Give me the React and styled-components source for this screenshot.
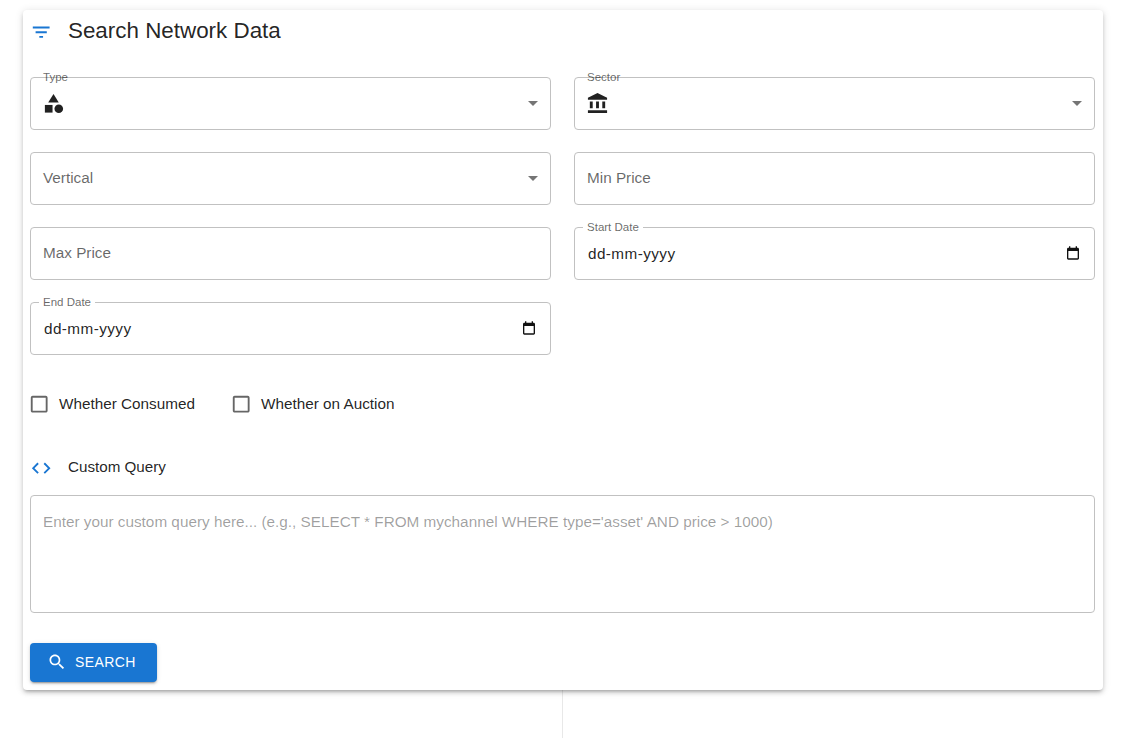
import React from 'react';
import styled, { createGlobalStyle } from 'styled-components';

const Global = createGlobalStyle`
  html, body { margin: 0; padding: 0; background: #fff; }
  body { font-family: "Liberation Sans", Arial, sans-serif; color: rgba(0,0,0,.87); }
  #root { height: 738px; overflow: hidden; }
`;

const Page = styled.div`
  height: 738px;
  display: flex;
  flex-direction: column;
  padding-top: 10px;
  box-sizing: border-box;
`;

const Card = styled.section`
  width: 1080px;
  height: 680px;
  margin-left: 23px;
  box-sizing: border-box;
  padding: 0 8px 0 7px;
  background: #fff;
  border-radius: 4px;
  box-shadow: 0 3px 3px -2px rgba(0,0,0,.2), 0 3px 4px 0 rgba(0,0,0,.14), 0 1px 8px 0 rgba(0,0,0,.12);
  position: relative;
  z-index: 1;
`;

const Divider = styled.div`
  flex: 1;
  width: 1px;
  margin-left: 562px;
  background: #e8e8e8;
`;

const Header = styled.header`
  display: flex;
  align-items: center;
  height: 42px;
  margin-bottom: 25px;
`;

const Title = styled.h2`
  margin: 0;
  font-size: 22.4px;
  font-weight: 400;
  line-height: 42px;
  color: rgba(0,0,0,.87);
`;

const LeadIcon = styled.svg`
  width: 22.4px;
  height: 22.4px;
  flex: none;
  margin: 2px 15.6px 0 0;
  fill: #1976d2;
`;

const Grid = styled.div`
  display: grid;
  grid-template-columns: 521px 521px;
  column-gap: 23px;
  grid-auto-rows: 53px;
  row-gap: 22px;
`;

const Field = styled.div`
  position: relative;
  box-sizing: border-box;
  height: 53px;
  border: 1px solid #c1c1c1;
  border-radius: 4px;
  display: flex;
  align-items: center;
  padding: 0 12px;
`;

const FloatLabel = styled.label`
  position: absolute;
  top: -7px;
  left: ${p => (p.$notch ? '8px' : '12px')};
  padding: ${p => (p.$notch ? '0 4px' : '0')};
  background: ${p => (p.$notch ? '#fff' : 'transparent')};
  font-size: 11.52px;
  line-height: 12px;
  color: rgba(0,0,0,.6);
`;

const Placeholder = styled.span`
  font-size: 15.3px;
  color: rgba(0,0,0,.6);
  margin-bottom: 2px;
`;

const DateText = styled.span`
  flex: 1;
  margin-left: 1px;
  font-size: 15.3px;
  letter-spacing: .42px;
  color: rgba(0,0,0,.87);
`;

const ValueIcon = styled.svg`
  width: 23px;
  height: 23px;
  margin: 0 0 1px -.6px;
  fill: rgba(0,0,0,.87);
`;

const Arrow = styled.svg`
  position: absolute;
  right: 5px;
  top: 13px;
  width: 24px;
  height: 24px;
  fill: rgba(0,0,0,.54);
`;

const CalendarIcon = styled.svg`
  width: 16px;
  height: 16px;
  margin: 0 1.5px 2px 0;
  fill: #111;
`;

const CheckRow = styled.div`
  display: flex;
  align-items: center;
  gap: 37px;
  margin-top: 37px;
  height: 24px;
`;

const CheckLabel = styled.label`
  display: flex;
  align-items: center;
  font-size: 15.3px;
  color: rgba(0,0,0,.87);
`;

const CheckIcon = styled.svg`
  width: 22.4px;
  height: 22.4px;
  margin: 0 8.4px 0 -1.8px;
  fill: rgba(0,0,0,.6);
`;

const QueryHeader = styled.div`
  display: flex;
  align-items: center;
  height: 24px;
  margin-top: 39px;
`;

const QueryTitle = styled.span`
  font-size: 15.2px;
  margin-bottom: 2px;
  color: rgba(0,0,0,.87);
`;

const QueryBox = styled.div`
  box-sizing: border-box;
  margin-top: 16px;
  height: 118px;
  border: 1px solid #c1c1c1;
  border-radius: 4px;
  padding: 17px 12px;
  font-size: 15.3px;
  line-height: 18px;
  color: rgba(0,0,0,.38);
`;

const SearchButton = styled.button`
  display: flex;
  align-items: center;
  margin-top: 30px;
  width: 127px;
  height: 39px;
  padding: 0 0 1px 17px;
  border: 0;
  border-radius: 4px;
  background: #1976d2;
  color: #fff;
  font-family: inherit;
  font-size: 14px;
  font-weight: 400;
  letter-spacing: .4px;
  box-shadow: 0 3px 1px -2px rgba(0,0,0,.2), 0 2px 2px 0 rgba(0,0,0,.14), 0 1px 5px 0 rgba(0,0,0,.12);
`;

const SearchIcon = styled.svg`
  width: 20px;
  height: 20px;
  margin-right: 8px;
  fill: #fff;
`;

const Icon = ({ as: C, d, children }) => (
  <C viewBox="0 0 24 24">{d ? <path d={d} /> : children}</C>
);

const CAL = 'M19 4h-1V2h-2v2H8V2H6v2H5c-1.1 0-2 .9-2 2v14c0 1.1.9 2 2 2h14c1.1 0 2-.9 2-2V6c0-1.1-.9-2-2-2zm0 16H5V9h14v11z';
const DROP = 'M7 10l5 5 5-5z';
const CHECK = 'M19 5v14H5V5h14m0-2H5c-1.1 0-2 .9-2 2v14c0 1.1.9 2 2 2h14c1.1 0 2-.9 2-2V5c0-1.1-.9-2-2-2z';

const SelectField = ({ label, children, placeholder }) => (
  <Field>
    {label && <FloatLabel>{label}</FloatLabel>}
    {children}
    {placeholder && <Placeholder>{placeholder}</Placeholder>}
    <Icon as={Arrow} d={DROP} />
  </Field>
);

const DateField = ({ label }) => (
  <Field>
    <FloatLabel $notch>{label}</FloatLabel>
    <DateText>dd-mm-yyyy</DateText>
    <Icon as={CalendarIcon} d={CAL} />
  </Field>
);

const Check = ({ children }) => (
  <CheckLabel>
    <Icon as={CheckIcon} d={CHECK} />
    {children}
  </CheckLabel>
);

export default function App() {
  return (
    <Page>
      <Global />
      <Card>
        <Header>
          <Icon as={LeadIcon} d="M10 18h4v-2h-4v2zM3 6v2h18V6H3zm3 7h12v-2H6v2z" />
          <Title>Search Network Data</Title>
        </Header>
        <Grid>
          <SelectField label="Type">
            <ValueIcon viewBox="0 0 24 24">
              <path d="m12 2-5.5 9h11z" />
              <circle cx="17.5" cy="17.5" r="4.5" />
              <path d="M3 13.5h8v8H3z" />
            </ValueIcon>
          </SelectField>
          <SelectField label="Sector">
            <Icon as={ValueIcon} d="M4 10h3v7H4zm6.5 0h3v7h-3zM2 19h20v3H2zm15-9h3v7h-3zM12 1 2 6v2h20V6z" />
          </SelectField>
          <SelectField placeholder="Vertical" />
          <Field><Placeholder>Min Price</Placeholder></Field>
          <Field><Placeholder>Max Price</Placeholder></Field>
          <DateField label="Start Date" />
          <DateField label="End Date" />
        </Grid>
        <CheckRow>
          <Check>Whether Consumed</Check>
          <Check>Whether on Auction</Check>
        </CheckRow>
        <QueryHeader>
          <Icon as={LeadIcon} d="M9.4 16.6 4.8 12l4.6-4.6L8 6l-6 6 6 6 1.4-1.4zm5.2 0 4.6-4.6-4.6-4.6L16 6l6 6-6 6-1.4-1.4z" />
          <QueryTitle>Custom Query</QueryTitle>
        </QueryHeader>
        <QueryBox>Enter your custom query here... (e.g., SELECT * FROM mychannel WHERE type='asset' AND price &gt; 1000)</QueryBox>
        <SearchButton>
          <Icon as={SearchIcon} d="M15.5 14h-.79l-.28-.27C15.41 12.59 16 11.11 16 9.5 16 5.91 13.09 3 9.5 3S3 5.91 3 9.5 5.91 16 9.5 16c1.61 0 3.09-.59 4.23-1.57l.27.28v.79l5 4.99L20.49 19l-4.99-5zm-6 0C7.01 14 5 11.99 5 9.5S7.01 5 9.5 5 14 7.01 14 9.5 11.99 14 9.5 14z" />
          SEARCH
        </SearchButton>
      </Card>
      <Divider />
    </Page>
  );
}
